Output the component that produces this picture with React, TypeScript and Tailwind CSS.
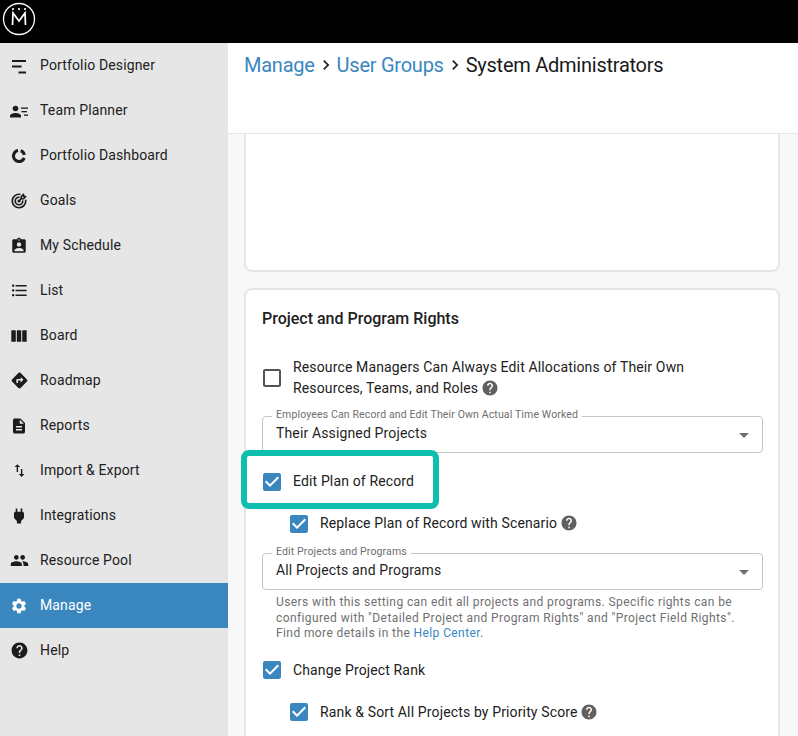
import type { ReactNode } from "react";
import {
  MdAssignmentInd,
  MdArrowDropDown,
  MdCheckBox,
  MdCheckBoxOutlineBlank,
  MdChevronRight,
  MdDescription,
  MdDirections,
  MdFormatListBulleted,
  MdHelp,
  MdPeople,
  MdPower,
  MdSettings,
  MdSwapVert,
} from "react-icons/md";
import { TbTargetArrow } from "react-icons/tb";

function DesignerIcon() {
  return (
    <svg width="24" height="24" viewBox="0 0 24 24" fill="currentColor">
      <rect x="5" y="6" width="14" height="2" />
      <rect x="5" y="11.500" width="9.500" height="2" />
      <rect x="11.500" y="17.500" width="7.500" height="2" />
    </svg>
  );
}

function TeamPlannerIcon() {
  return (
    <svg width="24" height="24" viewBox="0 0 24 24" fill="currentColor">
      <circle cx="8.500" cy="9.500" r="2.800" />
      <path d="M3 18.500v-1.400c0-1.900 3-3 5.500-3s5.500 1.100 5.500 3v1.400z" />
      <rect x="14" y="8.500" width="7" height="1.300" />
      <rect x="14.500" y="12" width="5.500" height="1.300" />
      <rect x="17" y="15.500" width="4" height="1.300" />
    </svg>
  );
}

function DashboardIcon() {
  return (
    <svg width="24" height="24" viewBox="0 0 24 24" fill="none" stroke="currentColor" strokeWidth="3">
      <path d="M17.170 13.880A5.500 5.500 0 1 1 11.040 6.580" />
      <path d="M13.700 6.770A5.500 5.500 0 0 1 17.380 10.860" />
    </svg>
  );
}

function BoardIcon() {
  return (
    <svg width="24" height="24" viewBox="0 0 24 24" fill="currentColor">
      <rect x="4.300" y="6.250" width="4.500" height="11.500" rx="0.600" />
      <rect x="9.800" y="6.250" width="4.400" height="11.500" rx="0.600" />
      <rect x="15.200" y="6.250" width="4.500" height="11.500" rx="0.600" />
    </svg>
  );
}

function Logo() {
  return (
    <svg width="34" height="34" viewBox="0 0 34 34" fill="none" stroke="white">
      <circle cx="17" cy="17" r="15.500" strokeWidth="1.300" />
      <path d="M10.500 23 L11 11 L17 19 L23 11 L23.500 23" strokeWidth="1.700" />
      <circle cx="11" cy="7" r="1.100" fill="white" stroke="none" />
      <circle cx="17" cy="7" r="1.100" fill="white" stroke="none" />
      <circle cx="23" cy="7" r="1.100" fill="white" stroke="none" />
    </svg>
  );
}

const navItems: { label: string; icon: ReactNode; active?: boolean }[] = [
  { label: "Portfolio Designer", icon: <DesignerIcon /> },
  { label: "Team Planner", icon: <TeamPlannerIcon /> },
  { label: "Portfolio Dashboard", icon: <DashboardIcon /> },
  { label: "Goals", icon: <TbTargetArrow size={18} strokeWidth={2.2} /> },
  { label: "My Schedule", icon: <MdAssignmentInd size={18} /> },
  { label: "List", icon: <MdFormatListBulleted size={19} /> },
  { label: "Board", icon: <BoardIcon /> },
  { label: "Roadmap", icon: <MdDirections size={19} /> },
  { label: "Reports", icon: <MdDescription size={18} /> },
  { label: "Import & Export", icon: <MdSwapVert size={17} /> },
  { label: "Integrations", icon: <MdPower size={20} /> },
  { label: "Resource Pool", icon: <MdPeople size={19} /> },
  { label: "Manage", icon: <MdSettings size={18} />, active: true },
  { label: "Help", icon: <MdHelp size={19} /> },
];

function CheckBox({ checked }: { checked?: boolean }) {
  return (
    <span className="w-[18px] h-[18px] shrink-0 flex items-center justify-center">
      {checked ? (
        <MdCheckBox size={24} className="shrink-0 text-[#3a87c0]" />
      ) : (
        <MdCheckBoxOutlineBlank size={24} className="shrink-0 text-[#555555]" />
      )}
    </span>
  );
}

function Info() {
  return <MdHelp size={18} className="inline-block text-[#616161] align-[-4px] ml-[-1px]" />;
}

function SelectField({ label, value }: { label: string; value: string }) {
  return (
    <div className="relative h-[37px] border border-[#c4c4c4] rounded-[4px] flex items-center justify-between pl-[13px] pr-[10px]">
      <span className="absolute left-[9px] top-[-9px] bg-white px-[4px] text-[10.500px] leading-[13px] text-[#6e6e6e]">
        {label}
      </span>
      <span className="text-[14px] leading-[21px] tracking-[0.14px] text-[#1f1f1f] mb-[2px]">{value}</span>
      <MdArrowDropDown size={24} className="text-[#707070] mr-[-4px]" />
    </div>
  );
}

export default function App() {
  return (
    <div className="h-[736px] w-[798px] overflow-hidden flex flex-col bg-white text-[#212121] font-['Roboto',sans-serif]">
      <div className="h-[43px] shrink-0 bg-black flex items-start pl-[2px] pt-[2px]">
        <Logo />
      </div>

      <div className="flex flex-1 min-h-0">
        <nav className="w-[228px] shrink-0 bg-[#e6e6e6]">
          {navItems.map((item) => (
            <div
              key={item.label}
              className={
                item.active
                  ? "h-[45px] flex items-center bg-[#3a87c0] text-white"
                  : "h-[45px] flex items-center text-[#212121]"
              }
            >
              <span className={item.active ? "w-[38px] flex justify-center shrink-0 text-white" : "w-[38px] flex justify-center shrink-0 text-[#1c1c1c]"}>
                {item.icon}
              </span>
              <span className="ml-[2px] text-[14px] tracking-[0.14px] leading-[21px]">{item.label}</span>
            </div>
          ))}
        </nav>

        <main className="flex-1 min-w-0 flex flex-col">
          <header className="h-[91px] shrink-0 bg-white border-b border-[#e6e6e6] pl-[16px] pt-[9px] flex items-start text-[20px] leading-[26px] tracking-[-0.25px]">
            <span className="text-[#3a87c0]">Manage</span>
            <MdChevronRight size={20} className="mt-[3px] mx-[1px]" />
            <span className="text-[#3a87c0]">User Groups</span>
            <MdChevronRight size={20} className="mt-[3px] mx-[1px]" />
            <span className="text-[#1a1a1a]">System Administrators</span>
          </header>

          <div className="flex-1 min-h-0 overflow-hidden bg-[#f8f8f8] pl-[16px] pr-[18px]">
            <div className="h-[138px] bg-white border-2 border-t-0 border-[#e6e6e6] rounded-b-[8px]" />

            <section className="mt-[16px] bg-white border-2 border-[#e6e6e6] rounded-[8px] pt-[17px] px-[16px] pr-[15px] h-[600px] text-[14px] leading-[21px] tracking-[0.14px]">
              <h2 className="text-[16px] leading-[24px] font-medium tracking-normal">Project and Program Rights</h2>

              <div className="mt-[26px] h-[42px] flex items-center gap-[12px] pl-[1px]">
                <CheckBox />
                <div>
                  Resource Managers Can Always Edit Allocations of Their Own
                  <br />
                  Resources, Teams, and Roles <Info />
                </div>
              </div>

              <div className="mt-[17px]">
                <SelectField label="Employees Can Record and Edit Their Own Actual Time Worked" value="Their Assigned Projects" />
              </div>

              <div className="relative mt-[18px] h-[21px] flex items-center gap-[12px] pl-[1px]">
                <CheckBox checked />
                <span>Edit Plan of Record</span>
                <div className="absolute left-[-21px] top-[-21px] w-[198px] h-[59px] border-[6px] border-[#0ebfae] rounded-[8px]" />
              </div>

              <div className="mt-[21px] h-[21px] flex items-center gap-[12px] pl-[28px]">
                <CheckBox checked />
                <span>
                  Replace Plan of Record with Scenario <Info />
                </span>
              </div>

              <div className="mt-[19px]">
                <SelectField label="Edit Projects and Programs" value="All Projects and Programs" />
              </div>

              <p className="mt-[5px] pl-[14px] pr-[10px] text-[12px] leading-[15.500px] tracking-[0.4px] text-[#707070]">
                Users with this setting can edit all projects and programs. Specific rights can be
                configured with "Detailed Project and Program Rights" and "Project Field Rights".
                Find more details in the <span className="text-[#3a87c0]">Help Center</span>.
              </p>

              <div className="mt-[18px] h-[21px] flex items-center gap-[12px] pl-[1px]">
                <CheckBox checked />
                <span>Change Project Rank</span>
              </div>

              <div className="mt-[21px] h-[21px] flex items-center gap-[12px] pl-[28px]">
                <CheckBox checked />
                <span>
                  Rank &amp; Sort All Projects by Priority Score <Info />
                </span>
              </div>
            </section>
          </div>
        </main>
      </div>
    </div>
  );
}
